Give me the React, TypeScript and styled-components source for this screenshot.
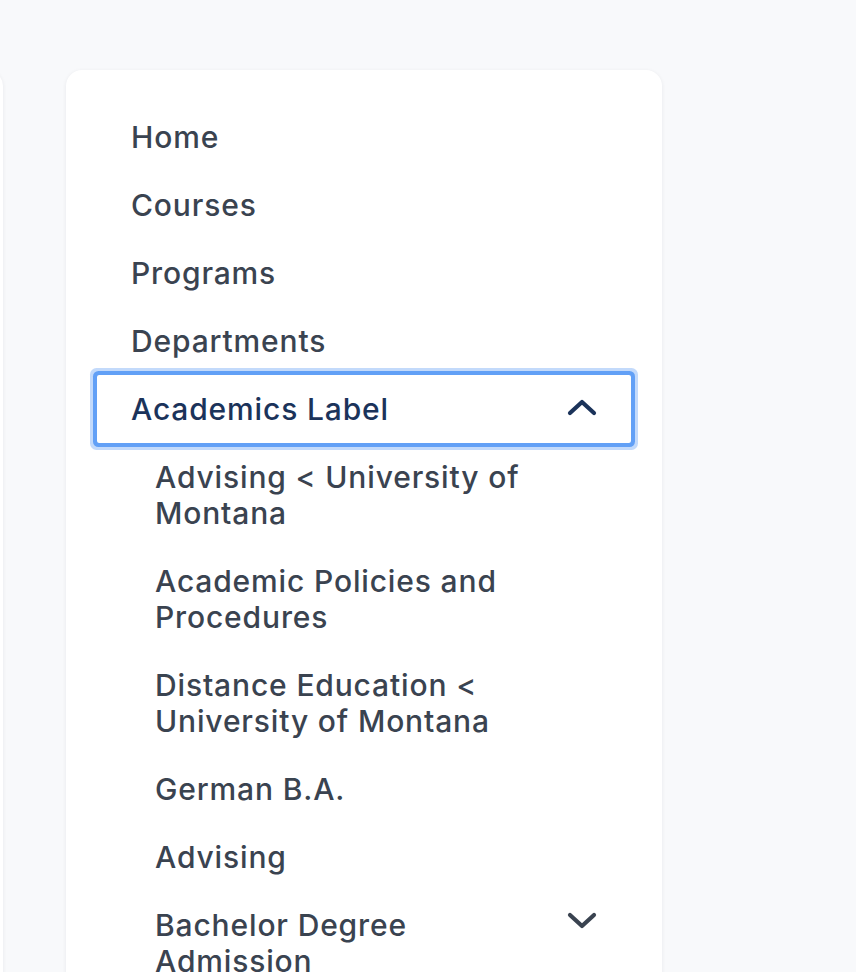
import React from "react";
import styled, { createGlobalStyle } from "styled-components";

const Global = createGlobalStyle`
  html, body { margin: 0; padding: 0; background: #f8f9fb; }
  body { font-family: Inter, "Noto Sans", "Liberation Sans", sans-serif; -webkit-font-smoothing: antialiased; }
`;

const Page = styled.div`
  height: 972px;
  background: #f8f9fb;
  padding-top: 70px;
  overflow: hidden;
  box-sizing: border-box;
`;

const Track = styled.div`
  display: flex;
  gap: 63px;
  transform: translateX(-593px);
`;

const Card = styled.nav`
  flex: 0 0 596px;
  min-height: 960px;
  background: #ffffff;
  border-radius: 16px;
  box-shadow: 0 1px 4px rgba(15, 23, 42, 0.07);
  padding: 33px 31px;
  box-sizing: border-box;
`;

const List = styled.ul`
  list-style: none;
  margin: 0;
  padding: 0;
  display: flex;
  flex-direction: column;
`;

const Item = styled.li<{ $sub?: boolean; $active?: boolean }>`
  display: flex;
  align-items: ${(p) => (p.$sub ? "flex-start" : "center")};
  justify-content: space-between;
  gap: 24px;
  padding: 16px 33px 16px ${(p) => (p.$sub ? 58 : 34)}px;
  font-size: 30px;
  line-height: 36px;
  font-weight: 500;
  color: ${(p) => (p.$active ? "#1b335a" : "#3a4350")};
  letter-spacing: 0.85px;
  ${(p) =>
    p.$active &&
    `box-shadow: 0 0 0 4px #62a0f6, 0 0 0 7px #c3dafb; border-radius: 2px;`}
`;

const Label = styled.span<{ $sub?: boolean }>`
  flex: 1;
  max-width: ${(p) => (p.$sub ? "390px" : "none")};
`;

const Chevron = styled.svg<{ $color: string }>`
  flex: 0 0 32px;
  width: 32px;
  height: 20px;
  color: ${(p) => p.$color};
`;

const ChevronWrap = styled.span<{ $offset: number }>`
  display: flex;
  align-items: center;
  height: 36px;
  margin-top: ${(p) => p.$offset}px;
`;

const Up = () => (
  <ChevronWrap $offset={-4}>
    <Chevron $color="#1b335a" viewBox="0 0 32 20">
      <polyline points="4,16 16,5 28,16" fill="none" stroke="currentColor" strokeWidth="4.2" strokeLinecap="round" strokeLinejoin="round" />
    </Chevron>
  </ChevronWrap>
);

const Down = () => (
  <ChevronWrap $offset={-5}>
    <Chevron $color="#3a4350" viewBox="0 0 32 20">
      <polyline points="4,5 16,16 28,5" fill="none" stroke="currentColor" strokeWidth="4.2" strokeLinecap="round" strokeLinejoin="round" />
    </Chevron>
  </ChevronWrap>
);

const top = ["Home", "Courses", "Programs", "Departments"];
const subs = [
  "Advising < University of Montana",
  "Academic Policies and Procedures",
  "Distance Education < University of Montana",
  "German B.A.",
  "Advising",
];

export default function App() {
  return (
    <>
      <Global />
      <Page>
        <Track>
          <Card aria-hidden />
          <Card>
            <List>
              {top.map((t) => (
                <Item key={t}>
                  <Label>{t}</Label>
                </Item>
              ))}
              <Item $active>
                <Label>Academics Label</Label>
                <Up />
              </Item>
              {subs.map((t) => (
                <Item key={t} $sub>
                  <Label $sub>{t}</Label>
                </Item>
              ))}
              <Item $sub>
                <Label $sub>Bachelor Degree Admission</Label>
                <Down />
              </Item>
            </List>
          </Card>
        </Track>
      </Page>
    </>
  );
}
